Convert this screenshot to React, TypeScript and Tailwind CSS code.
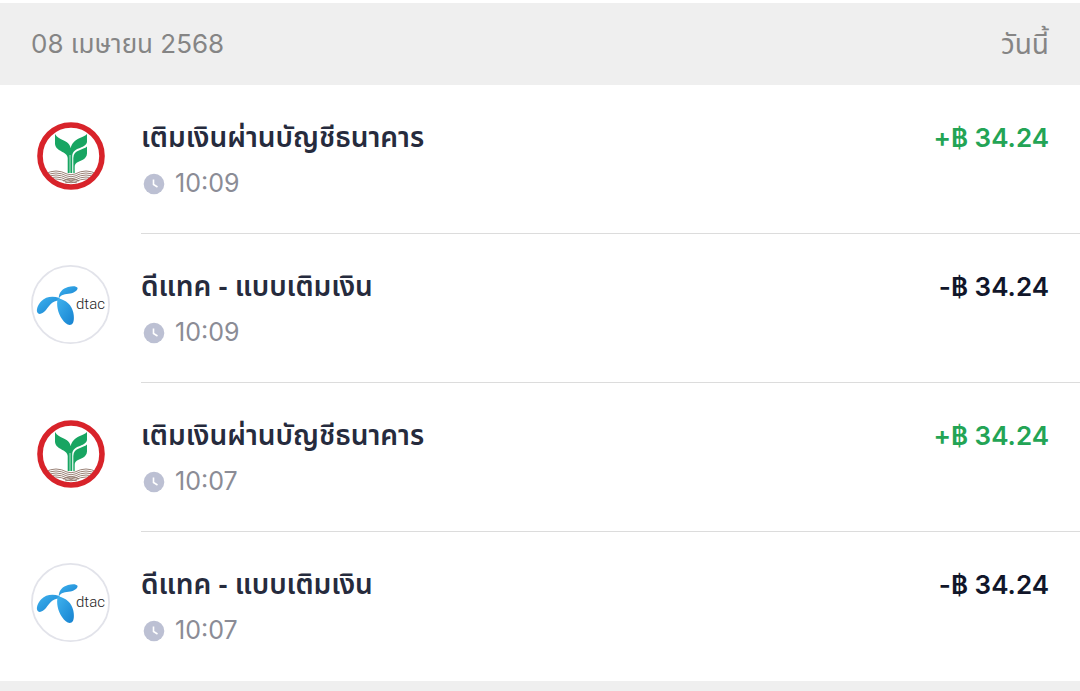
import React from "react";

type Transaction = {
  id: number;
  logo: "kbank" | "dtac";
  title: string;
  time: string;
  sign: "+" | "-";
  amount: string;
};

const transactions: Transaction[] = [
  { id: 1, logo: "kbank", title: "เติมเงินผ่านบัญชีธนาคาร", time: "10:09", sign: "+", amount: "34.24" },
  { id: 2, logo: "dtac", title: "ดีแทค - แบบเติมเงิน", time: "10:09", sign: "-", amount: "34.24" },
  { id: 3, logo: "kbank", title: "เติมเงินผ่านบัญชีธนาคาร", time: "10:07", sign: "+", amount: "34.24" },
  { id: 4, logo: "dtac", title: "ดีแทค - แบบเติมเงิน", time: "10:07", sign: "-", amount: "34.24" },
];

const KbankLogo = () => (
  <svg viewBox="0 0 80 80" className="size-20 shrink-0" role="img" aria-label="KBank">
    <defs>
      <clipPath id="kbank-disc">
        <circle cx="40" cy="40" r="28.4" />
      </clipPath>
    </defs>
    <circle cx="40" cy="40" r="31" fill="#fff" stroke="#d8232a" strokeWidth="5.6" />
    {/* waves */}
    <g clipPath="url(#kbank-disc)" fill="none" stroke="#8f7468" strokeWidth="0.9">
      <path d="M14 58q11-6 22 0q4 1.500 8 0q11-6 22 0" />
      <path d="M14 60q11-6 22 0q4 1.500 8 0q11-6 22 0" />
      <path d="M14 62q11-6 22 0q4 1.500 8 0q11-6 22 0" />
      <path d="M14 64q11-6 22 0q4 1.500 8 0q11-6 22 0" />
      <path d="M14 66q11-6 22 0q4 1.500 8 0q11-6 22 0" />
      <path d="M32 65q8-4 16 0M34 67q6-3 12 0" />
    </g>
    {/* leaves */}
    <g fill="#18a562">
      <path d="M24 18C26 21.500 29 22.700 31.700 24C36 26 39 28 39.700 32.300C40.500 27.500 44 24.500 48.300 22.300C51.500 20.800 54.500 20 56 18V26C55.500 29 52.500 30.500 50 31.500C45.500 33.200 41.500 35 41.200 40V57H36.700V42C36.500 35 24 36 24 27.300Z" />
      <path d="M56 30.500V37.500C55.500 44 49 44.500 45.700 46.800C44 48 43.700 49.500 43.700 51V57H42.300V42C42.500 33.500 52.500 34 56 30.500Z" />
    </g>
    <path d="M39 39V57" stroke="#d9f2e6" strokeWidth="0.800" />
  </svg>
);

const DtacLogo = () => (
  <svg viewBox="0 0 80 80" className="size-20 shrink-0" role="img" aria-label="dtac">
    <defs>
      <linearGradient id="dtac-blue" x1="0" y1="0" x2="1" y2="1">
        <stop offset="0" stopColor="#3fb2ee" />
        <stop offset="1" stopColor="#1682d0" />
      </linearGradient>
    </defs>
    <circle cx="39.500" cy="39.500" r="38.600" fill="#fff" stroke="#e2e3ea" strokeWidth="1.800" />
    <g fill="url(#dtac-blue)">
      <path d="M27.800 33.800C27.500 27 32 23.500 37 22C41 20.700 45.500 20.800 46.500 22.800C47.300 25 43 28 39.300 28.600C34.500 29.300 29.500 29.500 27.800 33.800Z" />
      <path d="M28.500 33C21 30.500 14.500 32 10.500 36C6.500 40 4.500 46 7 48.300C9 50 12.500 48 15 45C18.500 40.500 20.500 36 28.500 35.500Z" />
      <path d="M26.800 33.300C25 40 27 48.500 31 54C34 58.500 37.500 61 40.500 59.500C43.300 58 43.300 52 42.300 47.500C40.500 40 35.500 35 26.800 33.300Z" />
    </g>
    <text x="45" y="44" fontSize="15" fontFamily="Roboto, sans-serif" fontWeight="300" fill="#222">
      dtac
    </text>
  </svg>
);

const ClockIcon = () => (
  <svg viewBox="0 0 22 22" className="size-[22px]" aria-hidden="true">
    <circle cx="11" cy="11" r="10.300" fill="#bcc0d3" />
    <path d="M10.500 6.500V11.500L14.500 14" fill="none" stroke="#fff" strokeWidth="1.600" />
  </svg>
);

const TransactionRow = ({ item }: { item: Transaction }) => {
  const Logo = item.logo === "kbank" ? KbankLogo : DtacLogo;

  return (
    <li className="group flex pl-[31px]">
      <div className="pt-[31px]">
        <Logo />
      </div>
      <div className="ml-[30px] flex flex-1 items-start justify-between border-b border-[#dcdcdc] pt-8 pr-[31px] pb-[30px] group-last:border-transparent">
        <div>
          <h2 className="font-['Noto_Sans_Thai','Noto_Sans',sans-serif] text-[28px] leading-[44px] font-semibold text-[#262b3d]">
            {item.title}
          </h2>
          <p className="mt-1 flex h-[38px] items-center gap-2.5 pl-0.5 text-[25px] text-[#8b8c96]">
            <ClockIcon />
            <time>{item.time}</time>
          </p>
        </div>
        <p
          className={`text-[26px] leading-[42px] font-semibold ${
            item.sign === "+" ? "text-[#23a455]" : "text-[#11162a]"
          }`}
        >
          {item.sign}฿ {item.amount}
        </p>
      </div>
    </li>
  );
};

export default function App() {
  return (
    <main className="min-h-screen bg-[#efefef] font-['Inter','Noto_Sans_Thai','Noto_Sans',sans-serif]">
      <header className="flex items-center justify-between border-t-[3px] border-white px-[31px] py-[21px] leading-10 text-[#858585]">
        <h1 className="text-[26px]">08 เมษายน 2568</h1>
        <span className="text-[28px]">วันนี้</span>
      </header>
      <ul className="bg-white">
        {transactions.map((item) => (
          <TransactionRow key={item.id} item={item} />
        ))}
      </ul>
    </main>
  );
}
